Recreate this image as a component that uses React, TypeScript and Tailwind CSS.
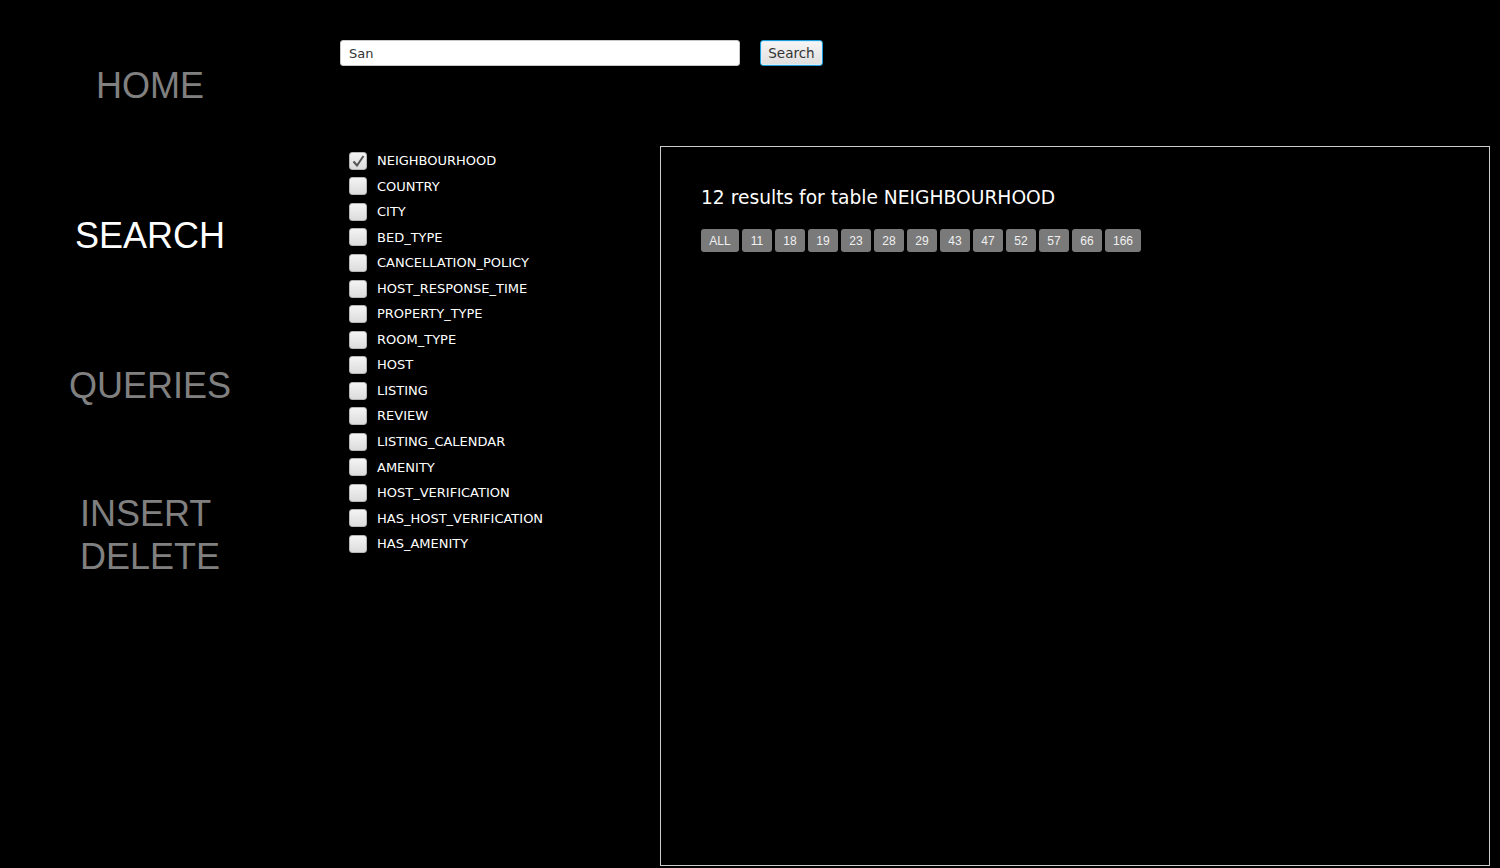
const nav = ['HOME', 'SEARCH', 'QUERIES']
const tables = [
  'NEIGHBOURHOOD',
  'COUNTRY',
  'CITY',
  'BED_TYPE',
  'CANCELLATION_POLICY',
  'HOST_RESPONSE_TIME',
  'PROPERTY_TYPE',
  'ROOM_TYPE',
  'HOST',
  'LISTING',
  'REVIEW',
  'LISTING_CALENDAR',
  'AMENITY',
  'HOST_VERIFICATION',
  'HAS_HOST_VERIFICATION',
  'HAS_AMENITY',
]
const pages = ['ALL', '11', '18', '19', '23', '28', '29', '43', '47', '52', '57', '66', '166']

function CheckBox({ checked }: { checked: boolean }) {
  return (
    <div className="w-[18px] h-[18px] rounded-[3px] border border-[#b5b5b5] bg-gradient-to-b from-[#f4f4f4] to-[#dcdcdc] flex items-center justify-center">
      {checked && (
        <svg width="13" height="12" viewBox="0 0 13 12">
          <path d="M1.5 6.5 L5 10.5 L11.5 1" fill="none" stroke="#555" strokeWidth="2" />
        </svg>
      )}
    </div>
  )
}

export default function App() {
  return (
    <div className="bg-black h-[868px] w-[1500px] flex overflow-hidden font-['DejaVu_Sans',sans-serif]">
      <div className="w-[300px] pt-[10px] font-['Liberation_Sans',Arial,sans-serif] text-[36px] leading-[43px]">
        {nav.map((n) => (
          <div key={n} className={`h-[150px] flex items-center justify-center ${n === 'SEARCH' ? 'text-white' : 'text-[#808080]'}`}>
            {n}
          </div>
        ))}
        <div className="h-[150px] flex items-center justify-center text-[#808080]">
          <div className="text-left">
            INSERT
            <br />
            DELETE
          </div>
        </div>
      </div>

      <div className="pl-[40px] pt-[40px] flex flex-col">
        <div className="flex items-center h-[26px]">
          <input
            defaultValue="San"
            className="w-[400px] h-[26px] bg-white rounded-[3px] border border-[#c8c8c8] px-[8px] text-[13px] text-[#333] outline-none"
          />
          <button className="ml-[20px] h-[26px] w-[63px] rounded-[3px] border border-[#1e9bd7] bg-gradient-to-b from-[#f6f6f6] to-[#dedede] text-[13.5px] text-[#333] shadow-[inset_0_0_0_1px_#d6eefa]">
            Search
          </button>
        </div>

        <div className="flex mt-[80px]">
          <div className="w-[320px] pt-[2px] pl-[9px] flex flex-col">
            {tables.map((t, i) => (
              <div key={t} className="h-[25.55px] flex items-center gap-[10px]">
                <CheckBox checked={i === 0} />
                <span className="text-white text-[13px]">{t}</span>
              </div>
            ))}
          </div>

          <div className="w-[830px] h-[720px] border border-[#cccccc] pt-[40px] pl-[40px]">
            <div className="text-white text-[18.67px] leading-[22px]">12 results for table NEIGHBOURHOOD</div>
            <div className="flex gap-[3px] mt-[20px]">
              {pages.map((p) => (
                <div
                  key={p}
                  className={`h-[23px] rounded-[3px] bg-[#7a7a7a] text-[#f0f0f0] text-[12px] font-['Liberation_Sans',Arial,sans-serif] flex items-center justify-center ${p === 'ALL' ? 'w-[38px]' : p === '166' ? 'w-[36px]' : 'w-[30px]'}`}
                >
                  {p}
                </div>
              ))}
            </div>
          </div>
        </div>
      </div>
    </div>
  )
}
